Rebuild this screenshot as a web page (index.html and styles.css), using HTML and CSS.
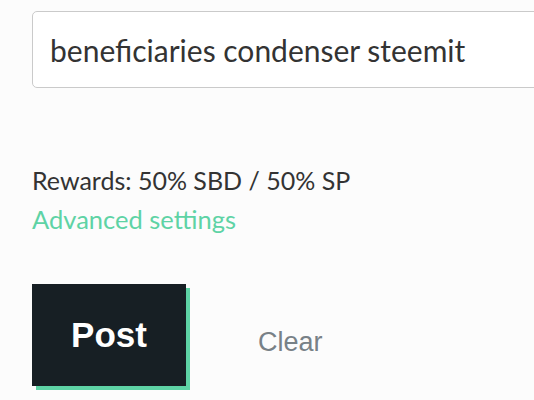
FILE: index.html
```html
<!DOCTYPE html>
<html>
<head>
<meta charset="utf-8">
<link rel="stylesheet" href="styles.css">
</head>
<body>
<div class="page">
  <div class="field">
    <input class="title-input" type="text" value="beneficiaries condenser steemit">
  </div>
  <div class="rewards">Rewards: 50% SBD / 50% SP</div>
  <a class="advanced" href="#">Advanced settings</a>
  <div class="actions">
    <button class="post-btn">Post</button>
    <button class="clear-btn">Clear</button>
  </div>
</div>
</body>
</html>
```
FILE: styles.css
```css
html, body {
  margin: 0;
  padding: 0;
  background: #fcfcfc;
  overflow: hidden;
  width: 534px;
  height: 400px;
}
.page {
  padding: 11px 0 0 32px;
  display: flex;
  flex-direction: column;
  align-items: flex-start;
  font-family: Lato, "Liberation Sans", sans-serif;
}
.field {
  width: 502px;
  overflow: hidden;
}
.title-input {
  display: block;
  box-sizing: border-box;
  width: 620px;
  height: 77px;
  border: 1.5px solid #cacaca;
  border-radius: 5px;
  background: #fff;
  padding: 0 17px;
  font-family: Lato, "Liberation Sans", sans-serif;
  font-size: 30px;
  color: #333;
  outline: none;
}
.rewards {
  margin-top: 73px;
  font-size: 25px;
  line-height: 39px;
  color: #333;
}
.advanced {
  font-size: 25.5px;
  line-height: 39px;
  color: #5ed3a5;
  text-decoration: none;
}
.actions {
  margin-top: 45px;
  display: flex;
  align-items: center;
}
.post-btn {
  width: 154px;
  height: 102px;
  background: #171f24;
  border: none;
  box-shadow: 4px 4px 0 #5ed3a5;
  color: #fff;
  font-family: "Liberation Sans", Arial, sans-serif;
  font-weight: bold;
  font-size: 35px;
  padding: 0;
}
.clear-btn {
  margin-left: 72px;
  margin-top: 14px;
  background: none;
  border: none;
  padding: 0;
  color: #788187;
  font-family: "Liberation Sans", Arial, sans-serif;
  font-size: 27px;
}
```
